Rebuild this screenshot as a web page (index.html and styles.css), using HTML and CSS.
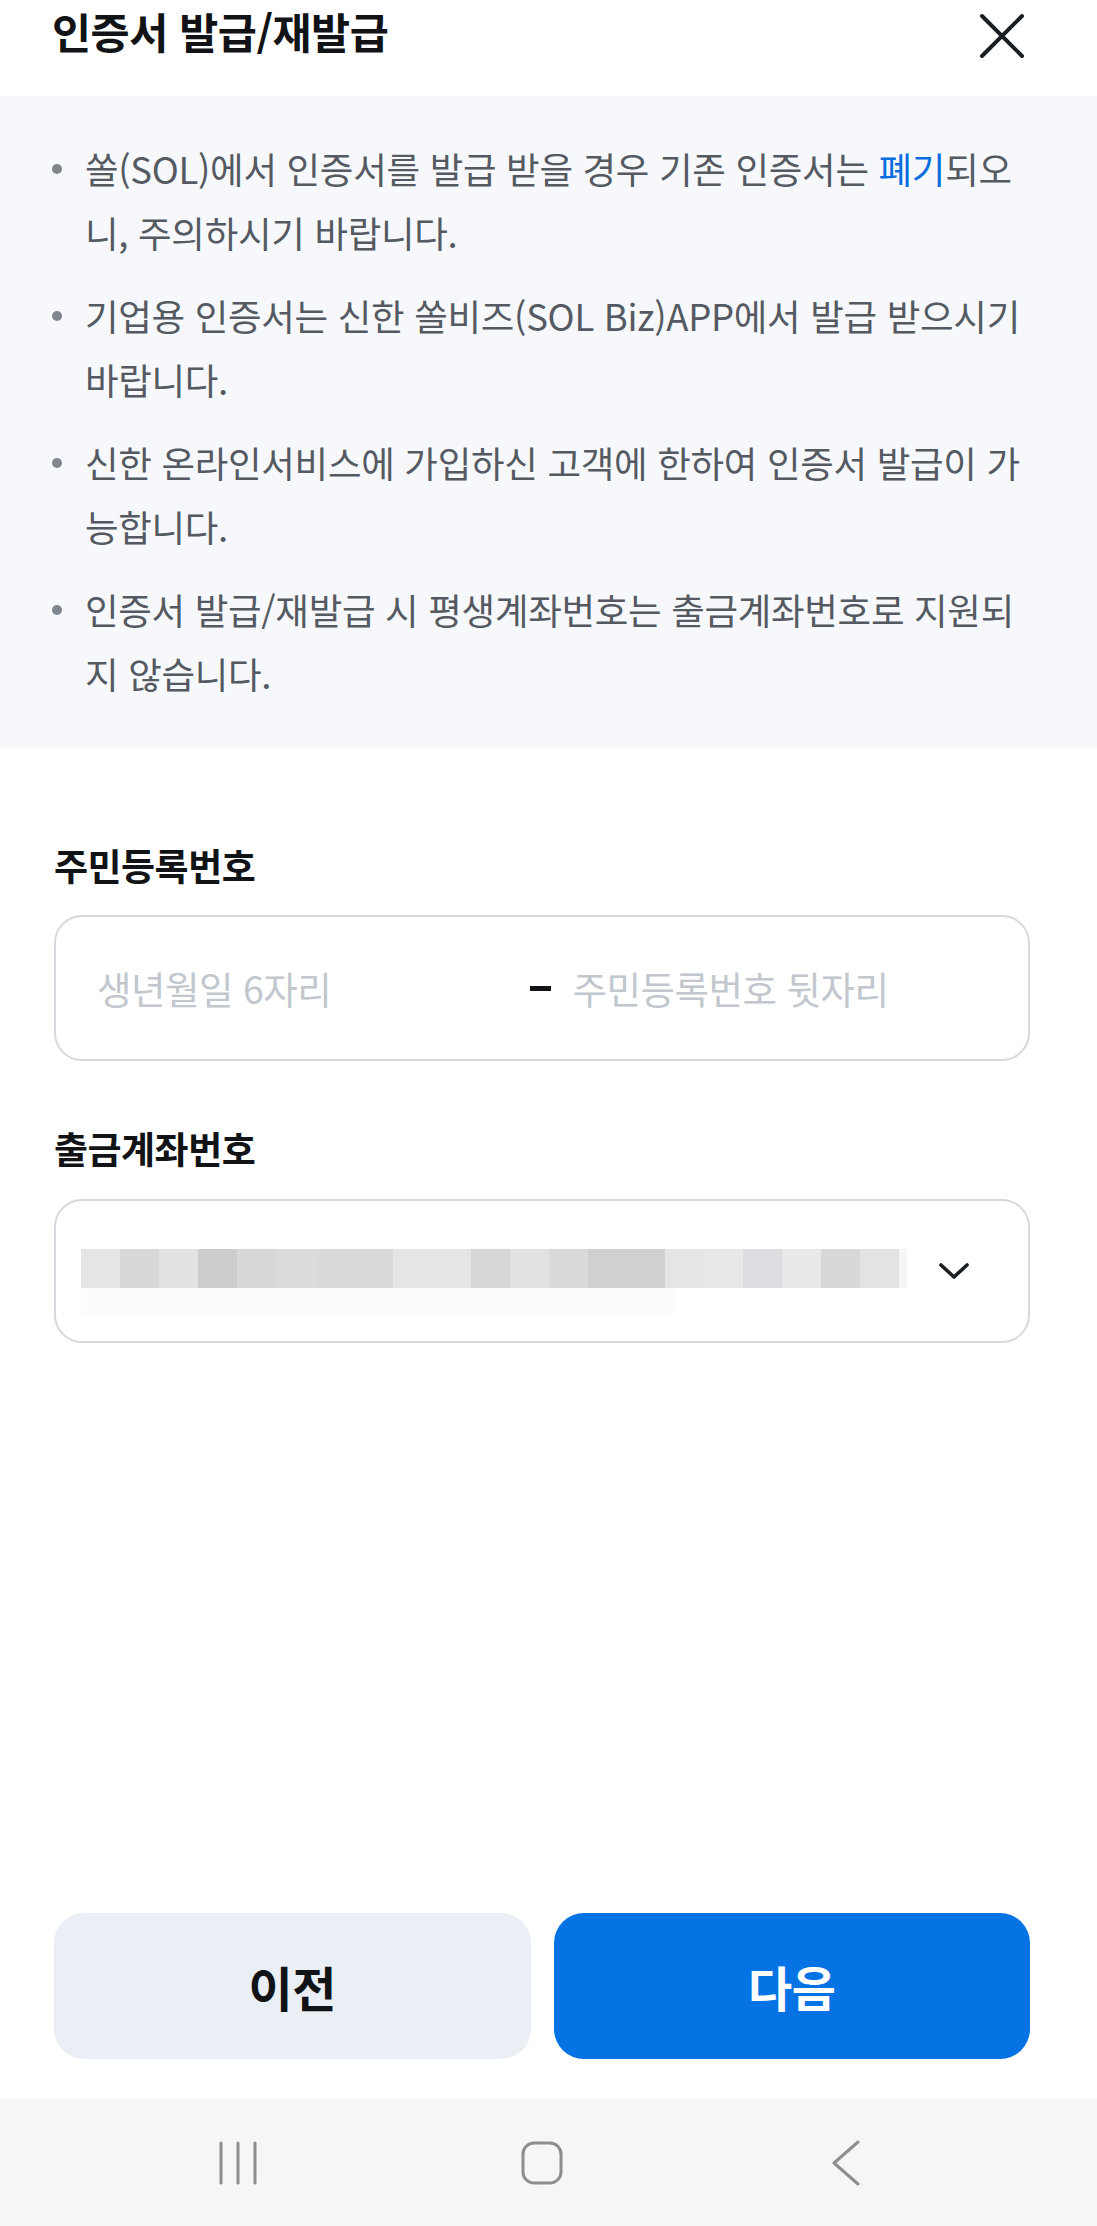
FILE: index.html
```html
<!DOCTYPE html>
<html lang="ko">
<head>
<meta charset="utf-8">
<title>인증서 발급/재발급</title>
<link rel="stylesheet" href="styles.css">
</head>
<body>
<div class="page">
  <header class="header">
    <h1 class="title">인증서 발급/재발급</h1>
    <button class="close" aria-label="닫기">
      <svg width="46" height="46" viewBox="0 0 46 46"><path d="M3 3 L43 43 M43 3 L3 43" stroke="#1b1e22" stroke-width="4" stroke-linecap="round" fill="none"/></svg>
    </button>
  </header>

  <section class="notice">
    <ul class="notice-list">
      <li>쏠(SOL)에서 인증서를 발급 받을 경우 기존 인증서는 <span class="hl">폐기</span>되오<br>니, 주의하시기 바랍니다.</li>
      <li>기업용 인증서는 신한 쏠비즈(SOL Biz)APP에서 발급 받으시기<br>바랍니다.</li>
      <li>신한 온라인서비스에 가입하신 고객에 한하여 인증서 발급이 가<br>능합니다.</li>
      <li>인증서 발급/재발급 시 평생계좌번호는 출금계좌번호로 지원되<br>지 않습니다.</li>
    </ul>
  </section>

  <section class="form">
    <div class="field-label">주민등록번호</div>
    <div class="box rrn">
      <input class="rrn-input" type="text" placeholder="생년월일 6자리">
      <span class="dash"></span>
      <input class="rrn-input" type="password" placeholder="주민등록번호 뒷자리">
    </div>

    <div class="field-label second">출금계좌번호</div>
    <div class="box select">
      <div class="masked">
        <div class="blur-row">
          <span></span><span></span><span></span><span></span><span></span><span></span><span></span><span></span><span></span><span></span><span></span><span></span><span></span><span></span><span></span><span></span><span></span><span></span><span></span>
        </div>
        <div class="blur-faint"></div>
      </div>
      <svg class="chev" width="32" height="18" viewBox="0 0 32 18"><path d="M3 3 L16 15 L29 3" stroke="#1b1e22" stroke-width="3.6" stroke-linecap="round" stroke-linejoin="round" fill="none"/></svg>
    </div>
  </section>

  <div class="actions">
    <button class="btn btn-prev">이전</button>
    <button class="btn btn-next">다음</button>
  </div>

  <nav class="sysnav">
    <span class="nav-slot">
      <svg width="40" height="44" viewBox="0 0 40 44"><path d="M3 2 V42 M20 2 V42 M37 2 V42" stroke="#8e8e8e" stroke-width="3" stroke-linecap="round"/></svg>
    </span>
    <span class="nav-slot">
      <svg width="44" height="44" viewBox="0 0 44 44"><rect x="3" y="2" width="38" height="40" rx="11" ry="11" stroke="#8e8e8e" stroke-width="3" fill="none"/></svg>
    </span>
    <span class="nav-slot">
      <svg width="30" height="46" viewBox="0 0 30 46"><path d="M27 2 L3 23 L27 44" stroke="#8e8e8e" stroke-width="3" stroke-linecap="round" stroke-linejoin="round" fill="none"/></svg>
    </span>
  </nav>
</div>
</body>
</html>
```

FILE: styles.css
```css
* { box-sizing: border-box; }

html, body {
  margin: 0;
  padding: 0;
  background: #ffffff;
}

body {
  font-family: "Noto Sans CJK KR", "Noto Sans", sans-serif;
  color: #111316;
}

.page {
  min-height: 100vh;
  display: flex;
  flex-direction: column;
}

/* header */
.header {
  height: 96px;
  display: flex;
  justify-content: space-between;
  align-items: flex-start;
  padding: 6px 72px 0 52px;
}

.title {
  margin: 0;
  font-size: 42.5px;
  line-height: 50px;
  font-weight: 700;
  letter-spacing: -0.5px;
  color: #111316;
}

.close {
  margin: 7px 0 0 0;
  padding: 0;
  border: 0;
  background: none;
  width: 46px;
  height: 46px;
  display: block;
}
.close svg { display: block; }

/* notice */
.notice {
  background: #f6f8fb;
  padding: 41px 0 41px 0;
}

.notice-list {
  list-style: none;
  margin: 0;
  padding: 0 0 0 85px;
  display: flex;
  flex-direction: column;
  gap: 19px;
}

.notice-list li {
  position: relative;
  font-size: 36.5px;
  line-height: 64px;
  color: #555a62;
  white-space: nowrap;
  letter-spacing: -0.3px;
}

.notice-list li::before {
  content: "";
  position: absolute;
  left: -33px;
  top: 27px;
  width: 10px;
  height: 10px;
  border-radius: 50%;
  background: #80868e;
}

.hl { color: #0a6ee0; }

/* form */
.form {
  padding: 94px 67px 0 54px;
  display: flex;
  flex-direction: column;
}

.field-label {
  font-size: 37px;
  line-height: 48px;
  font-weight: 700;
  color: #111316;
  letter-spacing: -0.5px;
  margin-bottom: 26px;
}

.field-label.second {
  margin-top: 63px;
  margin-bottom: 27px;
}

.box {
  border: 2px solid #d5d9de;
  border-radius: 28px;
  background: #ffffff;
  display: flex;
  align-items: center;
}

.rrn {
  height: 146px;
  padding: 0 41px;
}

.rrn-input {
  flex: 1 1 0;
  min-width: 0;
  border: 0;
  outline: none;
  background: transparent;
  padding: 0;
  font-family: "Noto Sans CJK KR", "Noto Sans", sans-serif;
  font-size: 37.5px;
  line-height: 50px;
  color: #111316;
  letter-spacing: -0.5px;
}

.rrn-input::placeholder {
  color: #c2c7ce;
}

.dash {
  flex: 0 0 21px;
  height: 5px;
  background: #111316;
  margin: 0 22px 0 18px;
}

.select {
  height: 144px;
  padding: 0 60px 0 25px;
}

.masked {
  flex: 0 0 826px;
  margin-right: 31px;
  padding-top: 20px;
  display: flex;
  flex-direction: column;
}

.blur-row {
  height: 39px;
  display: flex;
}

.blur-row span { flex: 1 1 0; background: #e4e5e7; }
.blur-row span:nth-child(1)  { background: #e4e5e7; }
.blur-row span:nth-child(2)  { background: #d7d8da; }
.blur-row span:nth-child(3)  { background: #e1e2e4; }
.blur-row span:nth-child(4)  { background: #cbcccd; }
.blur-row span:nth-child(5)  { background: #d6d7d9; }
.blur-row span:nth-child(6)  { background: #dbdcde; }
.blur-row span:nth-child(7)  { background: #d9dadc; flex-grow: 2; }
.blur-row span:nth-child(8)  { background: #e4e5e7; flex-grow: 2; }
.blur-row span:nth-child(9)  { background: #d6d7d9; }
.blur-row span:nth-child(10) { background: #e1e2e4; }
.blur-row span:nth-child(11) { background: #d9dadc; }
.blur-row span:nth-child(12) { background: #cfd0d2; flex-grow: 2; }
.blur-row span:nth-child(13) { background: #e4e5e7; }
.blur-row span:nth-child(14) { background: #e7e8ea; }
.blur-row span:nth-child(15) { background: #dcdde0; }
.blur-row span:nth-child(16) { background: #e8e9eb; }
.blur-row span:nth-child(17) { background: #d7d8da; }
.blur-row span:nth-child(18) { background: #e2e3e5; }
.blur-row span:nth-child(19) { background: #f4f6f6; flex-grow: 0.2; }

.blur-faint {
  height: 26px;
  width: 594px;
  background: #fcfcfc;
}

.chev { display: block; flex: 0 0 32px; }

/* actions */
.actions {
  margin-top: auto;
  padding: 0 67px 0 54px;
  display: flex;
  gap: 23px;
  margin-bottom: 40px;
}

.btn {
  flex: 1 1 0;
  height: 146px;
  border: 0;
  border-radius: 30px;
  font-family: "Noto Sans CJK KR", "Noto Sans", sans-serif;
  font-size: 48px;
  font-weight: 700;
  letter-spacing: -0.5px;
  padding: 0;
}

.btn-prev {
  background: #eaeef5;
  color: #111316;
}

.btn-next {
  background: #0673e5;
  color: #ffffff;
}

/* system nav */
.sysnav {
  height: 127px;
  background: #f6f6f6;
  display: flex;
  justify-content: center;
  align-items: center;
  gap: 184px;
  padding-right: 13px;
}

.nav-slot {
  width: 120px;
  display: flex;
  justify-content: center;
  align-items: center;
}
.nav-slot svg { display: block; }
```
